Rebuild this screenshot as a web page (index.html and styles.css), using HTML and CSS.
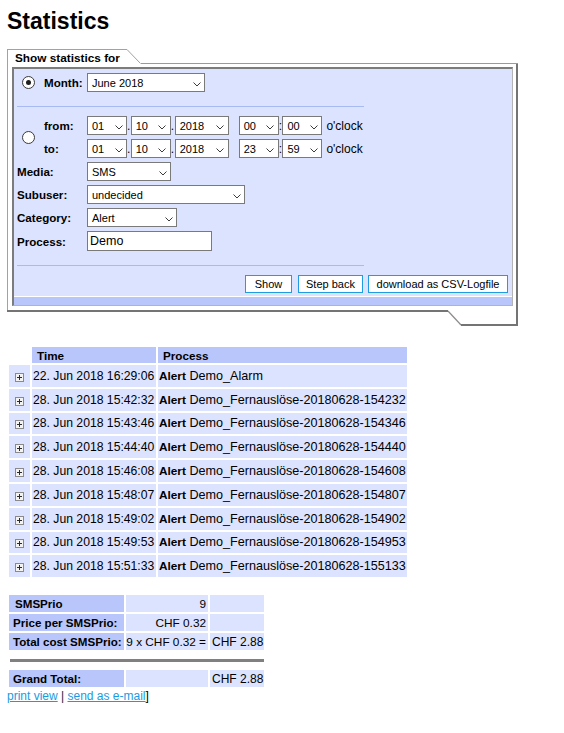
FILE: index.html
```html
<!DOCTYPE html>
<html>
<head>
<meta charset="utf-8">
<title>Statistics</title>
<link rel="stylesheet" href="styles.css">
</head>
<body>
<div class="page">
  <h1 class="title">Statistics</h1>

  <div class="frame">
    <div class="frame-top">
      <div class="tab">Show statistics for</div>
      <svg class="tab-slope" width="14" height="15" viewBox="0 0 14 15"><line x1="0" y1="0.5" x2="13.5" y2="14.5"/></svg>
      <div class="top-line"></div>
    </div>
    <div class="frame-body">
      <div class="panel">
        <div class="form">
          <div class="grid month-row">
            <span class="radio checked"></span>
            <span class="lbl">Month:</span>
            <div class="ctrl">
              <span class="sel w-month"><span>June 2018</span><svg class="chev" width="8" height="5" viewBox="0 0 8 5"><polyline points="0.5,0.5 4,4 7.5,0.5"/></svg></span>
            </div>
          </div>
          <div class="sep"></div>
          <div class="grid period">
            <span class="radio r-span"></span>
            <span class="lbl">from:</span>
            <div class="ctrl">
              <span class="sel w-40"><span>01</span><svg class="chev" width="8" height="5" viewBox="0 0 8 5"><polyline points="0.5,0.5 4,4 7.5,0.5"/></svg></span><span class="dot">.</span><span class="sel w-40"><span>10</span><svg class="chev" width="8" height="5" viewBox="0 0 8 5"><polyline points="0.5,0.5 4,4 7.5,0.5"/></svg></span><span class="dot d2">.</span><span class="sel w-54"><span>2018</span><svg class="chev" width="8" height="5" viewBox="0 0 8 5"><polyline points="0.5,0.5 4,4 7.5,0.5"/></svg></span><span class="sel w-40 hour"><span>00</span><svg class="chev" width="8" height="5" viewBox="0 0 8 5"><polyline points="0.5,0.5 4,4 7.5,0.5"/></svg></span><span class="dot">:</span><span class="sel w-40"><span>00</span><svg class="chev" width="8" height="5" viewBox="0 0 8 5"><polyline points="0.5,0.5 4,4 7.5,0.5"/></svg></span><span class="oclock">o'clock</span>
            </div>
            <span class="lbl">to:</span>
            <div class="ctrl">
              <span class="sel w-40"><span>01</span><svg class="chev" width="8" height="5" viewBox="0 0 8 5"><polyline points="0.5,0.5 4,4 7.5,0.5"/></svg></span><span class="dot">.</span><span class="sel w-40"><span>10</span><svg class="chev" width="8" height="5" viewBox="0 0 8 5"><polyline points="0.5,0.5 4,4 7.5,0.5"/></svg></span><span class="dot d2">.</span><span class="sel w-54"><span>2018</span><svg class="chev" width="8" height="5" viewBox="0 0 8 5"><polyline points="0.5,0.5 4,4 7.5,0.5"/></svg></span><span class="sel w-40 hour"><span>23</span><svg class="chev" width="8" height="5" viewBox="0 0 8 5"><polyline points="0.5,0.5 4,4 7.5,0.5"/></svg></span><span class="dot">:</span><span class="sel w-40"><span>59</span><svg class="chev" width="8" height="5" viewBox="0 0 8 5"><polyline points="0.5,0.5 4,4 7.5,0.5"/></svg></span><span class="oclock">o'clock</span>
            </div>
            <span class="lbl wide">Media:</span>
            <div class="ctrl">
              <span class="sel w-media"><span>SMS</span><svg class="chev" width="8" height="5" viewBox="0 0 8 5"><polyline points="0.5,0.5 4,4 7.5,0.5"/></svg></span>
            </div>
            <span class="lbl wide">Subuser:</span>
            <div class="ctrl">
              <span class="sel w-subuser"><span>undecided</span><svg class="chev" width="8" height="5" viewBox="0 0 8 5"><polyline points="0.5,0.5 4,4 7.5,0.5"/></svg></span>
            </div>
            <span class="lbl wide">Category:</span>
            <div class="ctrl">
              <span class="sel w-cat"><span>Alert</span><svg class="chev" width="8" height="5" viewBox="0 0 8 5"><polyline points="0.5,0.5 4,4 7.5,0.5"/></svg></span>
            </div>
            <span class="lbl wide">Process:</span>
            <div class="ctrl">
              <input class="input" type="text" value="Demo">
            </div>
          </div>
          <div class="sep sep2"></div>
          <div class="actions">
            <button class="btn b-show">Show</button>
            <button class="btn b-back">Step back</button>
            <button class="btn b-csv">download as CSV-Logfile</button>
          </div>
        </div>
        <div class="strip"></div>
      </div>
    </div>
    <div class="frame-bottom">
      <div class="bottom-line"></div>
      <svg class="foot-slope" width="13" height="16" viewBox="0 0 13 16"><line x1="0" y1="1" x2="13" y2="15"/></svg>
      <div class="foot"></div>
    </div>
  </div>

  <table class="log">
    <tr>
      <th class="blank"></th>
      <th class="c-time">Time</th>
      <th class="c-proc">Process</th>
    </tr>
    <tr><td class="ico"><svg width="9" height="9" viewBox="0 0 9 9"><rect x="0.5" y="0.5" width="8" height="8"/><path d="M2 4.5H7M4.5 2V7"/></svg></td><td class="time">22. Jun 2018 16:29:06</td><td class="proc"><b>Alert</b> Demo_Alarm</td></tr>
    <tr><td class="ico"><svg width="9" height="9" viewBox="0 0 9 9"><rect x="0.5" y="0.5" width="8" height="8"/><path d="M2 4.5H7M4.5 2V7"/></svg></td><td class="time">28. Jun 2018 15:42:32</td><td class="proc"><b>Alert</b> Demo_Fernauslöse-20180628-154232</td></tr>
    <tr><td class="ico"><svg width="9" height="9" viewBox="0 0 9 9"><rect x="0.5" y="0.5" width="8" height="8"/><path d="M2 4.5H7M4.5 2V7"/></svg></td><td class="time">28. Jun 2018 15:43:46</td><td class="proc"><b>Alert</b> Demo_Fernauslöse-20180628-154346</td></tr>
    <tr><td class="ico"><svg width="9" height="9" viewBox="0 0 9 9"><rect x="0.5" y="0.5" width="8" height="8"/><path d="M2 4.5H7M4.5 2V7"/></svg></td><td class="time">28. Jun 2018 15:44:40</td><td class="proc"><b>Alert</b> Demo_Fernauslöse-20180628-154440</td></tr>
    <tr><td class="ico"><svg width="9" height="9" viewBox="0 0 9 9"><rect x="0.5" y="0.5" width="8" height="8"/><path d="M2 4.5H7M4.5 2V7"/></svg></td><td class="time">28. Jun 2018 15:46:08</td><td class="proc"><b>Alert</b> Demo_Fernauslöse-20180628-154608</td></tr>
    <tr><td class="ico"><svg width="9" height="9" viewBox="0 0 9 9"><rect x="0.5" y="0.5" width="8" height="8"/><path d="M2 4.5H7M4.5 2V7"/></svg></td><td class="time">28. Jun 2018 15:48:07</td><td class="proc"><b>Alert</b> Demo_Fernauslöse-20180628-154807</td></tr>
    <tr><td class="ico"><svg width="9" height="9" viewBox="0 0 9 9"><rect x="0.5" y="0.5" width="8" height="8"/><path d="M2 4.5H7M4.5 2V7"/></svg></td><td class="time">28. Jun 2018 15:49:02</td><td class="proc"><b>Alert</b> Demo_Fernauslöse-20180628-154902</td></tr>
    <tr><td class="ico"><svg width="9" height="9" viewBox="0 0 9 9"><rect x="0.5" y="0.5" width="8" height="8"/><path d="M2 4.5H7M4.5 2V7"/></svg></td><td class="time">28. Jun 2018 15:49:53</td><td class="proc"><b>Alert</b> Demo_Fernauslöse-20180628-154953</td></tr>
    <tr><td class="ico"><svg width="9" height="9" viewBox="0 0 9 9"><rect x="0.5" y="0.5" width="8" height="8"/><path d="M2 4.5H7M4.5 2V7"/></svg></td><td class="time">28. Jun 2018 15:51:33</td><td class="proc"><b>Alert</b> Demo_Fernauslöse-20180628-155133</td></tr>
  </table>

  <table class="sum">
    <tr><th class="k k-first">SMSPrio</th><td class="v">9</td><td class="c"></td></tr>
    <tr><th class="k">Price per SMSPrio:</th><td class="v">CHF 0.32</td><td class="c"></td></tr>
    <tr><th class="k">Total cost SMSPrio:</th><td class="v">9 x CHF 0.32 =</td><td class="c">CHF 2.88</td></tr>
    <tr class="rule"><td colspan="3"><div class="hr"></div></td></tr>
    <tr><th class="k">Grand Total:</th><td class="v"></td><td class="c">CHF 2.88</td></tr>
  </table>

  <div class="links"><a href="#">print view</a> <span class="pipe">|</span> <a href="#">send as e-mail</a>]</div>
</div>
</body>
</html>
```

FILE: styles.css
```css
html, body {
  margin: 0;
  padding: 0;
  background: #ffffff;
}

body {
  font-family: "Liberation Sans", Arial, sans-serif;
  font-size: 12px;
  color: #000000;
}

.page {
  padding: 8px 0 0 7px;
}

.title {
  margin: 0;
  font-size: 23px;
  line-height: 26px;
  font-weight: bold;
}

/* ---------- Frame with tab ---------- */
.frame {
  width: 511px;
  margin-top: 15px;
}

.frame-top {
  display: flex;
  height: 15px;
}

.tab {
  box-sizing: border-box;
  width: 120px;
  height: 15px;
  border-top: 1px solid #a2a2a2;
  border-left: 1px solid #a2a2a2;
  padding: 2px 0 0 7px;
  font-size: 11.8px;
  line-height: 12px;
  font-weight: bold;
  white-space: nowrap;
}

.tab-slope,
.foot-slope {
  display: block;
  flex: none;
}

.tab-slope line {
  stroke: #a0a0a0;
  stroke-width: 1;
}

.foot-slope line {
  stroke: #8c8c8c;
  stroke-width: 1.2;
}

.top-line {
  flex: 1;
  border-bottom: 1px solid #9a9a9a;
}

.frame-body {
  border-left: 1px solid #a2a2a2;
  border-right: 2px solid #747474;
  padding: 3px 3px 4px 4px;
}

.frame-bottom {
  display: flex;
  align-items: flex-start;
  height: 16px;
}

.bottom-line {
  width: 441px;
  height: 2px;
  background: #747474;
  flex: none;
}

.foot {
  flex: 1;
  box-sizing: border-box;
  height: 16px;
  border-right: 2px solid #747474;
  border-bottom: 2px solid #747474;
}

/* ---------- Panel ---------- */
.panel {
  background: #dce3fe;
  border-top: 2px solid #7c7c7c;
  border-left: 2px solid #7c7c7c;
  border-right: 1px solid #b4b4b4;
  border-bottom: 1px solid #b4b4b4;
}

.form {
  padding: 4px 4px 3px 3px;
}

.grid {
  display: grid;
  grid-template-columns: 27px 43px auto;
  align-items: center;
}

.month-row {
  grid-template-rows: 19px;
}

.period {
  grid-template-rows: 19px 19px 19px 19px 19px 20px;
  row-gap: 4px;
}

.r-span {
  grid-row: 1 / span 2;
  grid-column: 1;
}

.lbl {
  font-weight: bold;
  font-size: 11.6px;
  white-space: nowrap;
}

.lbl.wide {
  grid-column: 1 / span 2;
}

.ctrl {
  display: flex;
  align-items: center;
}

.radio {
  box-sizing: border-box;
  width: 13px;
  height: 13px;
  margin-left: 5px;
  border: 1px solid #3a3a3a;
  border-radius: 50%;
  background: #ffffff;
  display: flex;
  align-items: center;
  justify-content: center;
}

.radio.checked::after {
  content: "";
  width: 5px;
  height: 5px;
  border-radius: 50%;
  background: #1e1e1e;
}

.sel {
  box-sizing: border-box;
  display: inline-flex;
  align-items: center;
  justify-content: space-between;
  height: 19px;
  border: 1px solid #7a7a7a;
  background: #ffffff;
  padding: 0 3.5px 0 4px;
  font-size: 11px;
  white-space: nowrap;
  flex: none;
}

.chev {
  display: block;
  margin-top: 3px;
}

.chev polyline {
  fill: none;
  stroke: #3c3c3c;
  stroke-width: 1;
}

.w-month { width: 118px; }
.w-40 { width: 40px; }
.w-54 { width: 54px; }
.w-media { width: 84px; }
.w-subuser { width: 158px; }
.w-cat { width: 90px; }

.dot {
  width: 3.7px;
  font-size: 12px;
  flex: none;
  overflow: visible;
}

.dot.d2 {
  width: 4px;
}

.hour {
  margin-left: 10px;
}

.oclock {
  margin-left: 4px;
  font-size: 12px;
  white-space: nowrap;
}

.input {
  box-sizing: border-box;
  width: 125px;
  height: 20px;
  margin: 0;
  border: 1px solid #7a7a7a;
  background: #ffffff;
  padding: 0 2px;
  font-family: "Liberation Sans", Arial, sans-serif;
  font-size: 12.5px;
  color: #000000;
  outline: none;
}

.sep {
  width: 347px;
  height: 1px;
  background: #a8baf2;
  margin: 14px 0 9px 0;
}

.actions {
  display: flex;
  justify-content: flex-end;
}

.btn {
  box-sizing: border-box;
  height: 18px;
  margin: 0;
  padding: 0;
  border: 1px solid #1f9de0;
  background: #ffffff;
  font-family: "Liberation Sans", Arial, sans-serif;
  font-size: 11px;
  color: #000000;
  text-align: center;
  white-space: nowrap;
}

.b-show { width: 47px; }
.b-back { width: 65px; margin-left: 6px; }
.b-csv { width: 140px; margin-left: 5px; }

.strip {
  height: 8px;
  border-top: 1px solid #ffffff;
  background: #b8c6fb;
}

/* ---------- Log table ---------- */
.log {
  margin-top: 19px;
  border-collapse: separate;
  border-spacing: 2px;
  table-layout: fixed;
  width: 402px;
}

.log th {
  height: 16px;
  padding: 0 0 0 5px;
  background: #b8c6fb;
  text-align: left;
  font-size: 11.7px;
  font-weight: bold;
  white-space: nowrap;
}

.log th.blank {
  background: transparent;
  width: 21px;
  padding: 0;
}

.log th.c-time { width: 119px; }
.log th.c-proc { width: 244px; }

.log td {
  height: 21.8px;
  padding: 0 1px;
  background: #dce3fe;
  white-space: nowrap;
  vertical-align: middle;
}

.log td.ico {
  text-align: center;
  padding: 0;
}

.log td.ico svg {
  display: inline-block;
  vertical-align: middle;
  margin-top: 1px;
}

.ico rect {
  fill: #f3f3f3;
  stroke: #8a8a8a;
  stroke-width: 1;
}

.ico path {
  fill: none;
  stroke: #2a2a2a;
  stroke-width: 1;
}

.log td.time {
  font-size: 12.2px;
}

.log td.proc {
  font-size: 12.6px;
}

.log td.proc b {
  font-size: 11.8px;
}

/* ---------- Summary ---------- */
.sum {
  margin-top: 14px;
  border-collapse: separate;
  border-spacing: 2px;
  table-layout: fixed;
  width: 259px;
}

.sum th.k {
  width: 111px;
  height: 17px;
  padding: 0 0 0 4px;
  background: #b8c6fb;
  text-align: left;
  font-size: 11.6px;
  font-weight: bold;
  white-space: nowrap;
}

.sum th.k-first {
  padding-left: 6px;
  width: 109px;
}

.sum td.v {
  width: 80px;
  padding: 0 2px 0 0;
  background: #dce3fe;
  text-align: right;
  white-space: nowrap;
  font-size: 11.8px;
}

.sum td.c {
  padding: 0 0 0 2px;
  background: #dce3fe;
  white-space: nowrap;
}

.sum tr.rule td {
  height: 16px;
  padding: 0 0 0 1px;
  background: transparent;
}

.hr {
  width: 254px;
  height: 3px;
  background: #808080;
}

.links {
  line-height: 14px;
  font-size: 12px;
  color: #000000;
}

.links a {
  color: #1a9be0;
  text-decoration: underline;
}

.pipe {
  color: #1a1a40;
}
```
